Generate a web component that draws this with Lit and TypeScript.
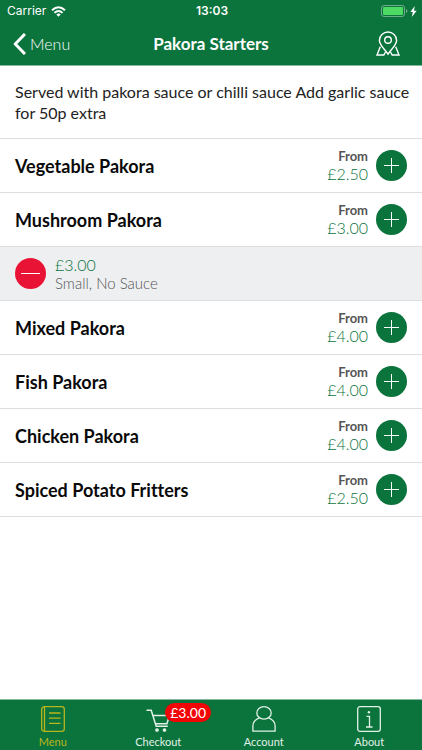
import { LitElement, html, css, svg, nothing } from "lit";
import { customElement, state } from "lit/decorators.js";
import { classMap } from "lit/directives/class-map.js";

interface Dish {
  name: string;
  price: string;
  chosen?: { price: string; options: string };
}

const dishes: Dish[] = [
  { name: "Vegetable Pakora", price: "£2.50" },
  { name: "Mushroom Pakora", price: "£3.00", chosen: { price: "£3.00", options: "Small, No Sauce" } },
  { name: "Mixed Pakora", price: "£4.00" },
  { name: "Fish Pakora", price: "£4.00" },
  { name: "Chicken Pakora", price: "£4.00" },
  { name: "Spiced Potato Fritters", price: "£2.50" },
];

const icons = {
  menu: svg`<rect x="1.700" y="1.700" width="22.600" height="24.600" rx="2.600"/><path d="M4.500 1.700v24.600M9 8h11.500M9 13.200h11.500M9 18.400h11.500"/>`,
  cart: svg`<path d="M1.500 5.200h4.700l5 16h11.600M7.900 10.500h16.600l-2.600 8.300h-11.400" stroke-width="1.500"/><circle cx="12" cy="25" r="1.200" fill="currentColor"/><circle cx="19.500" cy="25" r="1.200" fill="currentColor"/>`,
  account: svg`<ellipse cx="13" cy="7.900" rx="7.200" ry="6.200"/><path d="M8.600 12.800C4.500 14.200 1.900 17 1.900 21v5.200h22.200V21c0-4-2.600-6.800-6.700-8.200"/>`,
  about: svg`<rect x="1.700" y="1.700" width="22.600" height="24.600" rx="2.200"/><path d="M10.500 11.300h3v10.700M10 22h6.500"/><circle cx="12.900" cy="7.300" r="1.200" fill="currentColor" stroke="none"/>`,
};

const tabs = [
  { id: "menu", label: "Menu", icon: icons.menu },
  { id: "checkout", label: "Checkout", icon: icons.cart, badge: "£3.00" },
  { id: "account", label: "Account", icon: icons.account },
  { id: "about", label: "About", icon: icons.about },
];

@customElement("app-root")
export class AppRoot extends LitElement {
  @state() private active = "menu";

  static styles = css`
    :host {
      display: flex;
      flex-direction: column;
      min-height: 100vh;
      background: #fff;
      color: #0a0a0a;
      font-family: Lato, "Liberation Sans", sans-serif;
      font-variant-ligatures: none;
    }
    * {
      box-sizing: border-box;
    }
    button {
      font: inherit;
      color: inherit;
      background: none;
      border: 0;
      padding: 0;
      cursor: pointer;
    }
    svg {
      display: block;
      fill: none;
      stroke: currentColor;
    }
    .top {
      position: sticky;
      top: 0;
      z-index: 1;
      background: #0b733c;
      color: #fff;
      border-bottom: 1px solid #86b99d;
    }
    .status {
      display: grid;
      grid-template-columns: 1fr auto 1fr;
      align-items: center;
      height: 22px;
      padding: 0 5px 0 7px;
      font: 12px/22px Inter, "Liberation Sans", sans-serif;
    }
    .carrier {
      display: flex;
      align-items: center;
      gap: 5px;
    }
    .clock {
      font-weight: 600;
    }
    .power {
      display: flex;
      align-items: center;
      justify-content: flex-end;
      gap: 2px;
    }
    .nav {
      display: grid;
      grid-template-columns: 1fr auto 1fr;
      align-items: center;
      height: 43px;
      padding: 0 13px;
    }
    .back {
      display: flex;
      align-items: center;
      justify-self: start;
      gap: 4px;
      font-size: 16px;
      line-height: 24px;
      font-weight: 300;
    }
    .title {
      margin: 0;
      font-size: 17px;
      line-height: 24px;
      font-weight: 700;
    }
    .locate {
      justify-self: end;
      margin-right: 8px;
    }
    main {
      flex: 1;
    }
    .note {
      margin: 0;
      padding: 15px 8px 15px 15px;
      font-size: 16px;
      line-height: 21px;
      color: #222;
    }
    .list {
      list-style: none;
      margin: 0;
      padding: 0;
      border-bottom: 1px solid #dedede;
    }
    .row,
    .chosen {
      display: flex;
      align-items: center;
      min-height: 54px;
      padding: 0 15px;
      border-top: 1px solid #dedede;
    }
    .name {
      flex: 1;
      margin: 0;
      font-size: 18px;
      line-height: 24px;
      font-weight: 700;
    }
    .from {
      text-align: right;
      margin-right: 8px;
    }
    .label {
      display: block;
      font-size: 13px;
      line-height: 16px;
      font-weight: 700;
      color: #555;
    }
    .price {
      display: block;
      font-size: 16px;
      line-height: 19px;
      font-weight: 300;
      color: #0b733c;
    }
    .round {
      display: grid;
      place-items: center;
      flex: none;
      width: 31px;
      height: 31px;
      border-radius: 50%;
      color: #fff;
      background: #0b733c;
    }
    .round.remove {
      background: #e91435;
    }
    .chosen {
      gap: 9px;
      background: #eeeff1;
    }
    .options {
      display: block;
      font-size: 15px;
      line-height: 18px;
      font-weight: 300;
      color: #555;
    }
    .tabs {
      position: sticky;
      bottom: 0;
      display: grid;
      grid-template-columns: repeat(4, 1fr);
      background: #0b733c;
      border-top: 1px solid #86b99d;
    }
    .tab {
      display: flex;
      flex-direction: column;
      align-items: center;
      height: 50px;
      padding-top: 5px;
      font-size: 11px;
      line-height: 18px;
      color: #e2f1e8;
    }
    .tab.active {
      color: #b9b51e;
    }
    .icon {
      position: relative;
    }
    .badge {
      position: absolute;
      left: 20px;
      top: -2px;
      padding: 0 5px;
      border-radius: 10px;
      background: #f20505;
      color: #fff;
      font-size: 14px;
      line-height: 19px;
    }
  `;

  private renderDish(dish: Dish) {
    return html`
      <li>
        <div class="row">
          <h2 class="name">${dish.name}</h2>
          <div class="from">
            <span class="label">From</span>
            <span class="price">${dish.price}</span>
          </div>
          <button class="round" aria-label="Add ${dish.name}">
            <svg width="15" height="15" viewBox="0 0 15 15"><path d="M7.500 0v15M0 7.500h15" /></svg>
          </button>
        </div>
        ${dish.chosen
          ? html`<div class="chosen">
              <button class="round remove" aria-label="Remove ${dish.name}">
                <svg width="19" height="15" viewBox="0 0 19 15"><path d="M0 7.500h19" /></svg>
              </button>
              <div>
                <span class="price">${dish.chosen.price}</span>
                <span class="options">${dish.chosen.options}</span>
              </div>
            </div>`
          : nothing}
      </li>
    `;
  }

  render() {
    return html`
      <header class="top">
        <div class="status">
          <span class="carrier">
            Carrier
            <svg width="15" height="11" viewBox="0 0 15 11" stroke-width="2">
              <path d="M1 4.300Q7.500-1.800 14 4.300M3.400 6.900Q7.500 3 11.600 6.900" />
              <path d="M5.300 8.500Q7.500 6.600 9.700 8.500L7.500 10.800Z" fill="currentColor" stroke="none" />
            </svg>
          </span>
          <span class="clock">13:03</span>
          <span class="power">
            <svg width="27" height="12" viewBox="0 0 27 12">
              <rect x=".5" y=".5" width="23" height="11" rx="2.500" stroke="#6fae8a" />
              <rect x="2" y="2" width="20" height="8" rx="1" fill="#4cd964" stroke="none" />
              <path d="M25 4v4q1.500-.5 1.500-2T25 4Z" fill="#6fae8a" stroke="none" />
            </svg>
            <svg width="7" height="11" viewBox="0 0 7 11">
              <path d="M4.800 0 .3 6h2.500l-1 5L6.700 4.700H4Z" fill="currentColor" stroke="none" />
            </svg>
          </span>
        </div>
        <nav class="nav">
          <button class="back">
            <svg width="13" height="22" viewBox="0 0 13 22" stroke-width="3" stroke-linejoin="round">
              <path d="M12 1 2.200 11 12 21" />
            </svg>
            Menu
          </button>
          <h1 class="title">Pakora Starters</h1>
          <button class="locate" aria-label="Find us">
            <svg width="26" height="26" viewBox="0 0 26 26" stroke-width="1.400">
              <path d="M13 23.200C10.500 19 4.400 14 4.400 9.400a8.600 8.400 0 0 1 17.200 0C21.600 14 15.500 19 13 23.200Z" />
              <circle cx="13" cy="9" r="3.300" />
              <path d="M5.300 15.700 2 24h6.800l1.700-3M20.700 15.700 24 24h-6.800l-1.700-3" />
            </svg>
          </button>
        </nav>
      </header>
      <main>
        <p class="note">Served with pakora sauce or chilli sauce Add garlic sauce for 50p extra</p>
        <ul class="list">
          ${dishes.map((dish) => this.renderDish(dish))}
        </ul>
      </main>
      <nav class="tabs">
        ${tabs.map(
          (tab) => html`<button
            class=${classMap({ tab: true, active: this.active === tab.id })}
            @click=${() => (this.active = tab.id)}
          >
            <span class="icon">
              <svg width="26" height="28" viewBox="0 0 26 28" stroke-width="1.300">${tab.icon}</svg>
              ${tab.badge ? html`<span class="badge">${tab.badge}</span>` : nothing}
            </span>
            ${tab.label}
          </button>`,
        )}
      </nav>
    `;
  }
}
